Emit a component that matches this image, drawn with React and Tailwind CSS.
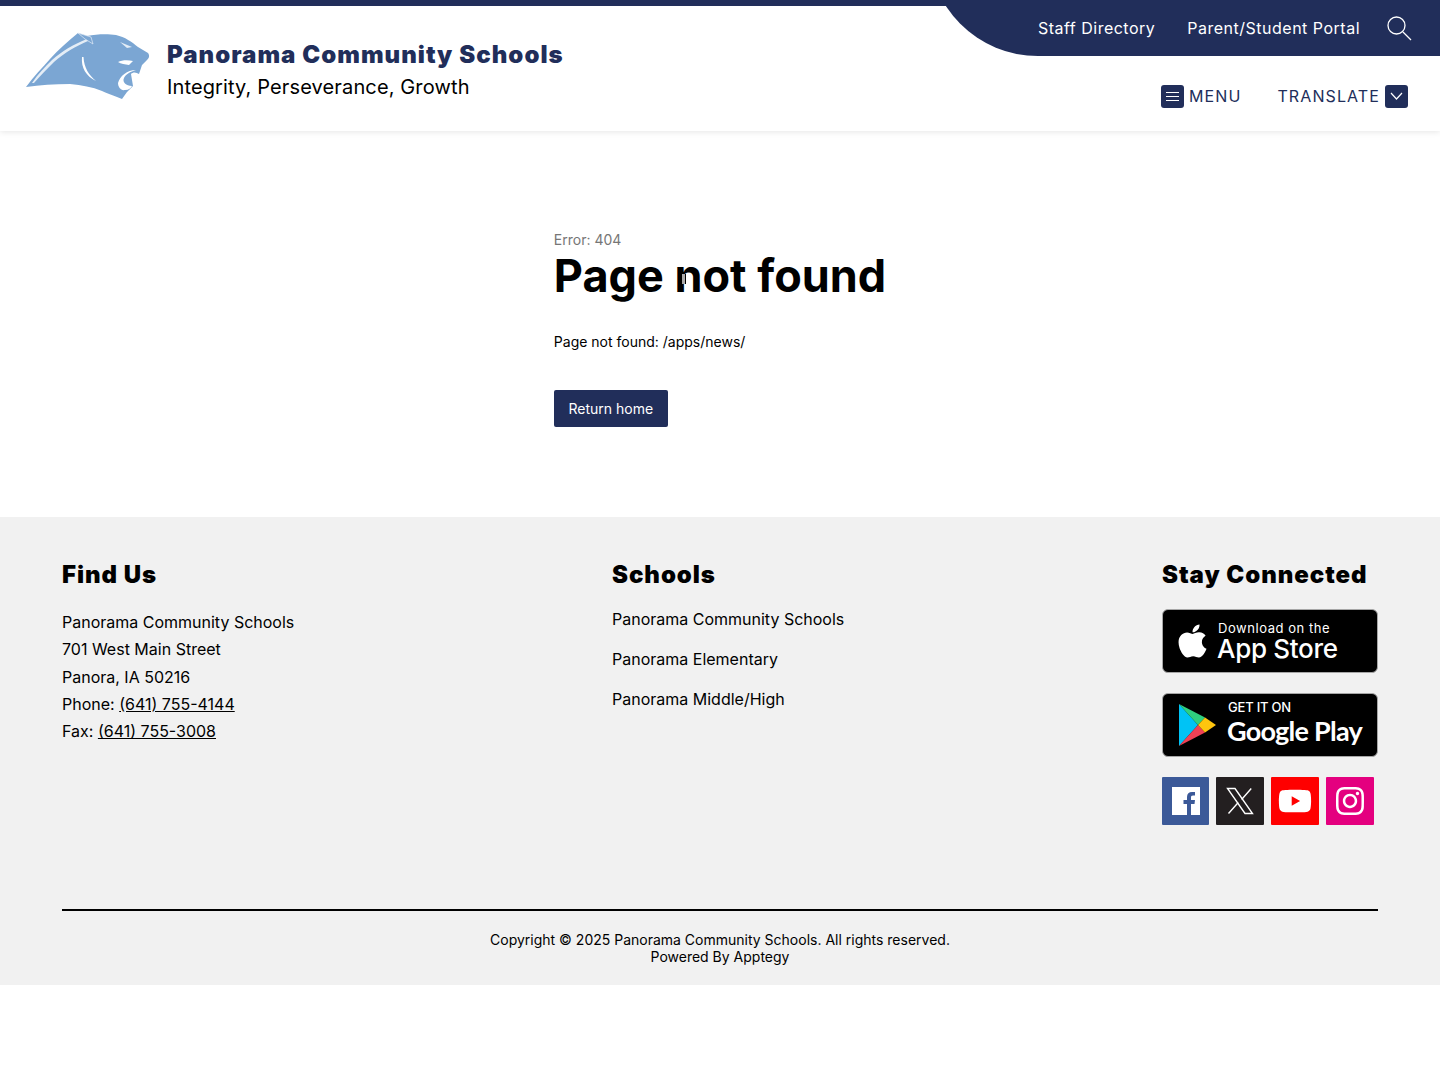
import { FaApple, FaYoutube, FaInstagram } from 'react-icons/fa6';

const PantherLogo = () => (
  <svg viewBox="25 30 126 70" className="h-[70px] w-[126px] shrink-0">
    <path
      d="M26 87 C34 76 42 68 50 59 C58 50 68 41 78 33 L87 36 C97 34 108 34 116 35 C125 37 132 42 138 47 L148 53 C150 56 149 58 147 60 L142 65 L139 74 C136 72 133 72 131 74 L133 86 L127 92 L122 99 L117 97 C112 95 106 93 102 91 C92 87 82 85 70 84 C54 84 40 85 26 87 Z"
      fill="#7ba6d3"
    />
    <path d="M32 83 C38 74 45 67 52 60 C62 51 74 44 87 39 L88 41 C76 46 64 53 54 62 C47 69 40 76 34 83 Z" fill="#e4edf6" />
    <path d="M82 57 C81 68 86 76 96 81 C89 75 84 68 83.5 57 Z" fill="#ffffff" />
    <path d="M118 62 C122 60 128 60 133 61 L129 65 C125 64 121 64 118 62 Z" fill="#ffffff" />
    <path d="M136 70 C127 70 120 76 118 83 C118 87 121 91 125 90 C129 90 131 88 132 86 C126 86 122 82 124 78 C126 74 130 72 136 70 Z" fill="#ffffff" />
    <path d="M120 42 L132 47 L127 48 Z" fill="#e4edf6" />
    <path d="M78 33 L91 37 L93 44 L85 39 Z" fill="#7ba6d3" stroke="#e4edf6" strokeWidth="0.7" />
  </svg>
);

const PlayLogo = () => (
  <svg viewBox="0 0 38 44" className="h-[44px] w-[38px] shrink-0">
    <path d="M1 1 L1 43 L20 22 Z" fill="#00c3f5" />
    <path d="M1 1 L20 22 L27 14.5 Z" fill="#2fd07f" />
    <path d="M1 43 L20 22 L27 29.5 Z" fill="#ef4155" />
    <path d="M27 14.5 L38 22 L27 29.5 L20 22 Z" fill="#ffc50e" />
  </svg>
);

const schools = ['Panorama Community Schools', 'Panorama Elementary', 'Panorama Middle/High'];

function App() {
  return (
    <div className="bg-white font-['Inter',sans-serif] text-black">
      <header className="relative z-10 flex h-[131px] justify-between border-t-[6px] border-[#212e5a] bg-white shadow-[0_1px_6px_rgba(0,0,0,0.1)]">
        <div className="flex items-start pl-[25px] pt-[24px]">
          <PantherLogo />
          <div className="ml-[16px] pt-[8px]">
            <div className="text-[24px] font-black leading-[34px] tracking-[1.03px] text-[#212e5a]">Panorama Community Schools</div>
            <div className="text-[20px] leading-[30px] tracking-[0.13px]">Integrity, Perseverance, Growth</div>
          </div>
        </div>
        <div className="flex w-[512px] flex-col">
          <div className="h-[50px] overflow-hidden">
            <div className="-mt-[60px] flex h-[110px] items-center justify-end rounded-bl-[110px] bg-[#212e5a] pb-[6px] pr-[28px] pt-[60px] text-[16px] tracking-[0.5px] text-white">
              <span>Staff Directory</span>
              <span className="ml-[32px]">Parent/Student Portal</span>
              <svg viewBox="0 0 26 26" fill="none" stroke="currentColor" strokeWidth="1.3" className="ml-[26px] h-[26px] w-[26px]">
                <circle cx="10.5" cy="10.5" r="8.5" />
                <path d="M17 17 L25 25" />
              </svg>
            </div>
          </div>
          <div className="mt-[28px] flex items-center justify-end pr-[32px] text-[16px] tracking-[1.1px] text-[#212e5a]">
            <span className="flex h-[23px] w-[23px] items-center justify-center rounded-[3px] bg-[#212e5a]">
              <svg viewBox="0 0 13 11" fill="none" stroke="white" strokeWidth="1" className="h-[11px] w-[13px]">
                <path d="M0 1.5 H13 M0 5.5 H13 M0 9.5 H13" />
              </svg>
            </span>
            <span className="ml-[5px]">MENU</span>
            <span className="ml-[36px]">TRANSLATE</span>
            <span className="ml-[5px] flex h-[23px] w-[23px] items-center justify-center rounded-[3px] bg-[#212e5a]">
              <svg viewBox="0 0 13 8" fill="none" stroke="white" strokeWidth="1.2" className="h-[8px] w-[13px]">
                <path d="M1 1 L6.5 7 L12 1" />
              </svg>
            </span>
          </div>
        </div>
      </header>

      <main className="h-[386px] bg-white pt-[101px]">
        <div className="mx-auto w-fit">
          <div className="-mt-[1px] text-[14px] leading-[17px] text-[#767676]">Error: 404</div>
          <h1 className="relative mt-[1px] text-[45px] font-bold leading-[54px]">
            Page not found
            <span className="absolute left-[127px] top-[25px] h-[10px] w-[5px] border-x border-black bg-[#aaaaaa]" />
          </h1>
          <p className="mt-[29px] text-[14px] leading-[20px]">Page not found: /apps/news/</p>
          <a className="mt-[38px] flex h-[37px] w-[114px] items-center justify-center rounded-[2px] bg-[#212e5a] text-[14px] text-white">Return home</a>
        </div>
      </main>

      <footer className="h-[468px] bg-[#f1f1f1] px-[62px] pt-[43px]">
        <div className="grid h-[351px] grid-cols-[550px_550px_216px] border-b-2 border-black">
          <div>
            <h2 className="text-[24px] font-black leading-[30px] tracking-[0.95px]">Find Us</h2>
            <div className="mt-[19px] text-[16px] leading-[27.3px]">
              <div>Panorama Community Schools</div>
              <div>701 West Main Street</div>
              <div>Panora, IA 50216</div>
              <div>Phone: <a className="underline">(641) 755-4144</a></div>
              <div>Fax: <a className="underline">(641) 755-3008</a></div>
            </div>
          </div>
          <div>
            <h2 className="text-[24px] font-black leading-[30px] tracking-[0.95px]">Schools</h2>
            <ul className="mt-[17px] flex flex-col gap-[16px] text-[16px] leading-[24px]">
              {schools.map((s) => <li key={s}>{s}</li>)}
            </ul>
          </div>
          <div>
            <h2 className="text-[24px] font-black leading-[30px] tracking-[0.95px]">Stay Connected</h2>
            <a className="mt-[19px] flex h-[64px] w-[216px] items-center rounded-[6px] border border-[#a6a6a6] bg-black pl-[13px] text-white">
              <FaApple className="h-[38px] w-[33px]" />
              <div className="ml-[8px]">
                <div className="ml-[1px] mt-[1px] text-[13px] leading-[15px] tracking-[0.55px]">Download on the</div>
                <div className="text-[26px] font-medium leading-[26px] tracking-[-0.3px]">App Store</div>
              </div>
            </a>
            <a className="mt-[20px] flex h-[64px] w-[216px] items-center rounded-[6px] border border-[#a6a6a6] bg-black pl-[15px] text-white">
              <PlayLogo />
              <div className="-mt-[5px] ml-[12px]">
                <div className="text-[13px] font-medium leading-[15px] tracking-[-0.2px]">GET IT ON</div>
                <div className="-ml-[1px] mt-[1px] font-['Lato',sans-serif] text-[27px] font-bold leading-[30px] tracking-[-0.75px]">Google Play</div>
              </div>
            </a>
            <div className="mt-[20px] flex">
              <a className="flex h-[48px] w-[47px] items-center justify-center rounded-[1px] bg-[#3b5998]">
                <svg viewBox="0 0 28 28" className="h-[28px] w-[28px]">
                  <rect width="28" height="28" fill="white" />
                  <path d="M19 28 V17 h3.5 l.5 -4 h-4 v-2.5 c0 -1.2 .4 -2 2 -2 h2 V5 c-.4 0 -1.6 -.1 -3 -.1 c-3 0 -5 1.8 -5 5 V13 h-3.5 v4 H15 v11 z" fill="#3b5998" />
                </svg>
              </a>
              <a className="ml-[7px] flex h-[48px] w-[48px] items-center justify-center rounded-[1px] bg-[#231f20]">
                <svg viewBox="0 0 24 24" fill="none" stroke="white" strokeWidth="1.1" className="h-[30px] w-[30px]">
                  <path d="M2 2 H8 L22 22 H16 Z" />
                  <path d="M21 2 L13.3 10.8 M2.8 22 L10.6 13.2" />
                </svg>
              </a>
              <a className="ml-[7px] flex h-[48px] w-[48px] items-center justify-center rounded-[1px] bg-[#ff0000] text-white"><FaYoutube className="h-[34px] w-[34px]" /></a>
              <a className="ml-[7px] flex h-[48px] w-[48px] items-center justify-center rounded-[1px] bg-[#e4007f] text-white"><FaInstagram className="h-[32px] w-[32px]" /></a>
            </div>
          </div>
        </div>
        <div className="pt-[20px] text-center text-[14px] leading-[17px]">
          <div>Copyright © 2025 Panorama Community Schools. All rights reserved.</div>
          <div>Powered By Apptegy</div>
        </div>
      </footer>
      <div className="h-[95px] bg-white" />
    </div>
  );
}

export default App;
